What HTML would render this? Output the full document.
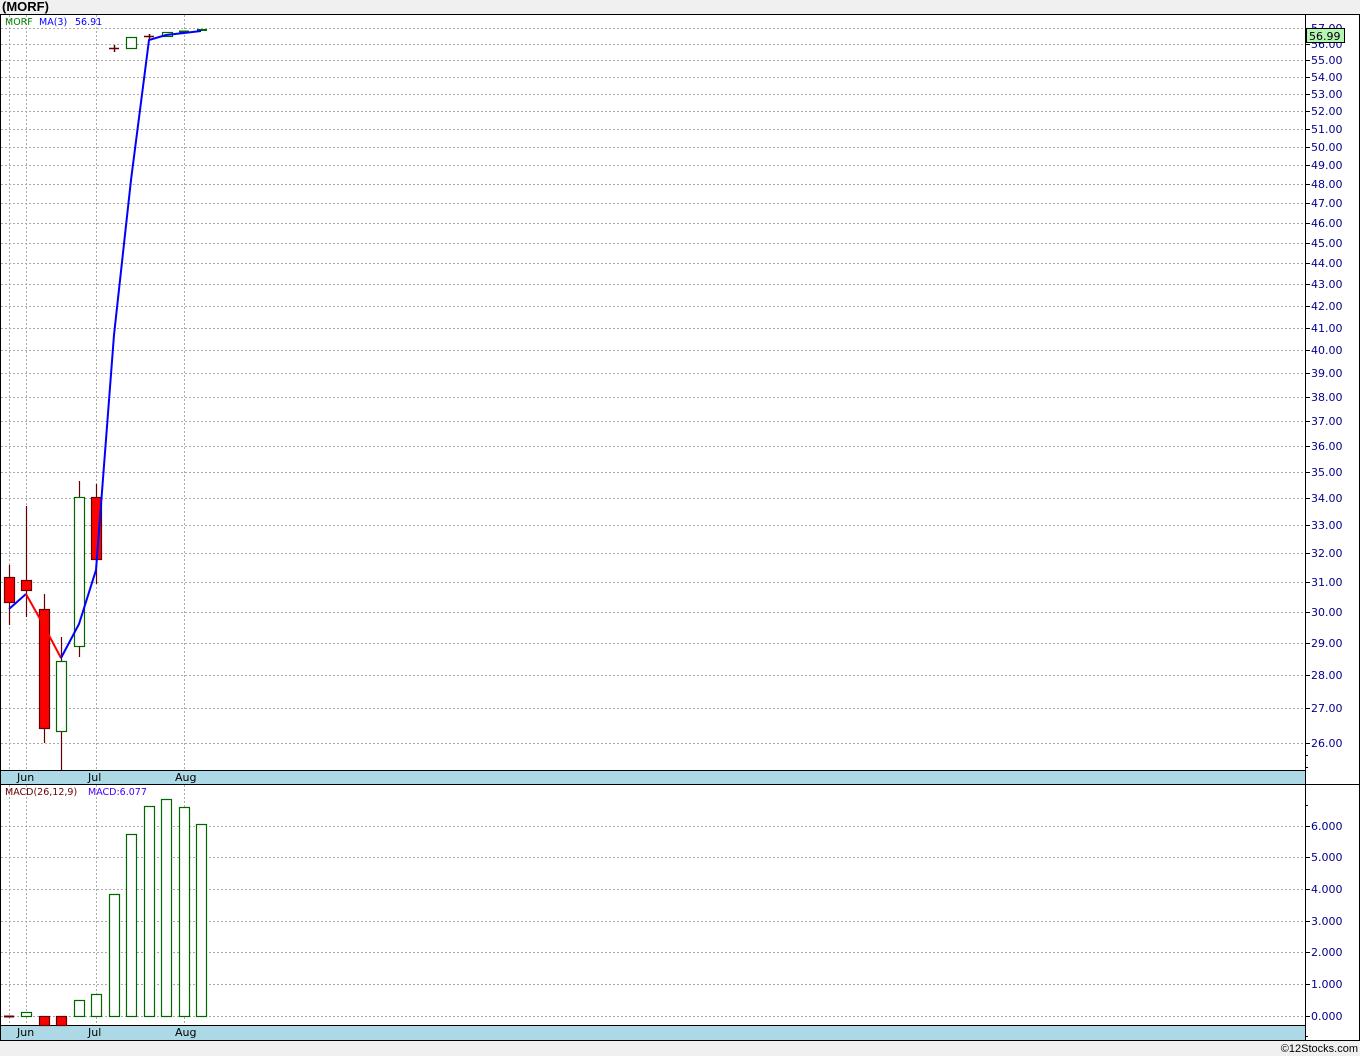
<!DOCTYPE html>
<html><head><meta charset="utf-8"><style>
html,body{margin:0;padding:0;background:#f0f0f0;}
svg{display:block;font-family:"DejaVu Sans","Liberation Sans",sans-serif;}
</style></head><body>
<svg width="1360" height="1056" viewBox="0 0 1360 1056" xmlns="http://www.w3.org/2000/svg">
<rect x="0" y="0" width="1360" height="1056" fill="#f0f0f0"/>
<text x="2" y="11" font-size="13" font-weight="bold" fill="#000" font-family="Liberation Sans, sans-serif">(MORF)</text>
<rect x="0" y="14" width="1360" height="1026" fill="#fff"/>
<line x1="0" y1="14.5" x2="1360" y2="14.5" stroke="#000"/>
<line x1="1359.5" y1="14" x2="1359.5" y2="1040" stroke="#000"/>
<line x1="0.5" y1="14" x2="0.5" y2="1040" stroke="#000"/>
<line x1="1305.5" y1="14" x2="1305.5" y2="1040" stroke="#000"/>
<line x1="0" y1="784.5" x2="1360" y2="784.5" stroke="#000"/>
<line x1="0" y1="1040.5" x2="1360" y2="1040.5" stroke="#000"/>
<rect x="1" y="770" width="1304" height="14" fill="#add8e6"/>
<line x1="0" y1="770.5" x2="1305" y2="770.5" stroke="#000"/>
<rect x="1" y="1025" width="1304" height="15" fill="#add8e6"/>
<line x1="0" y1="1025.5" x2="1305" y2="1025.5" stroke="#000"/>
<g font-size="11" fill="#000">
<text x="17" y="781">Jun</text><text x="88" y="781">Jul</text><text x="175" y="781">Aug</text>
<text x="17" y="1036">Jun</text><text x="88" y="1036">Jul</text><text x="175" y="1036">Aug</text>
</g>
<g stroke="#aaa" stroke-dasharray="2,2" stroke-width="1">
<path d="M1 28.5H1305M1 44.5H1305M1 60.5H1305M1 77.5H1305M1 94.5H1305M1 111.5H1305M1 129.5H1305M1 147.5H1305M1 165.5H1305M1 184.5H1305M1 203.5H1305M1 223.5H1305M1 243.5H1305M1 263.5H1305M1 284.5H1305M1 306.5H1305M1 328.5H1305M1 350.5H1305M1 373.5H1305M1 397.5H1305M1 421.5H1305M1 446.5H1305M1 472.5H1305M1 498.5H1305M1 525.5H1305M1 553.5H1305M1 582.5H1305M1 612.5H1305M1 643.5H1305M1 675.5H1305M1 708.5H1305M1 743.5H1305"/>
<path d="M9.5 15V770M26.5 15V770M96.5 15V770M184.5 15V770"/>
<path d="M1 826.5H1305M1 857.5H1305M1 889.5H1305M1 921.5H1305M1 952.5H1305M1 984.5H1305M1 1016.5H1305"/>
<path d="M9.5 785V1025M26.5 785V1025M96.5 785V1025M184.5 785V1025"/>
</g>
<g stroke="#000" stroke-width="1">
<path d="M1305 28.5h5M1305 44.5h5M1305 60.5h5M1305 77.5h5M1305 94.5h5M1305 111.5h5M1305 129.5h5M1305 147.5h5M1305 165.5h5M1305 184.5h5M1305 203.5h5M1305 223.5h5M1305 243.5h5M1305 263.5h5M1305 284.5h5M1305 306.5h5M1305 328.5h5M1305 350.5h5M1305 373.5h5M1305 397.5h5M1305 421.5h5M1305 446.5h5M1305 472.5h5M1305 498.5h5M1305 525.5h5M1305 553.5h5M1305 582.5h5M1305 612.5h5M1305 643.5h5M1305 675.5h5M1305 708.5h5M1305 743.5h5M1305 755.5h3M1305 767.5h3"/>
<path d="M1305 826.5h5M1305 857.5h5M1305 889.5h5M1305 921.5h5M1305 952.5h5M1305 984.5h5M1305 1016.5h5M1305 805.5h3M1305 1036.5h3"/>
</g>
<g font-size="11" fill="#00008b">
<text x="1311" y="32">57.00</text><text x="1311" y="48">56.00</text><text x="1311" y="64">55.00</text><text x="1311" y="81">54.00</text><text x="1311" y="98">53.00</text><text x="1311" y="115">52.00</text><text x="1311" y="133">51.00</text><text x="1311" y="151">50.00</text><text x="1311" y="169">49.00</text><text x="1311" y="188">48.00</text><text x="1311" y="207">47.00</text><text x="1311" y="227">46.00</text><text x="1311" y="247">45.00</text><text x="1311" y="267">44.00</text><text x="1311" y="288">43.00</text><text x="1311" y="310">42.00</text><text x="1311" y="332">41.00</text><text x="1311" y="354">40.00</text><text x="1311" y="377">39.00</text><text x="1311" y="401">38.00</text><text x="1311" y="425">37.00</text><text x="1311" y="450">36.00</text><text x="1311" y="476">35.00</text><text x="1311" y="502">34.00</text><text x="1311" y="529">33.00</text><text x="1311" y="557">32.00</text><text x="1311" y="586">31.00</text><text x="1311" y="616">30.00</text><text x="1311" y="647">29.00</text><text x="1311" y="679">28.00</text><text x="1311" y="712">27.00</text><text x="1311" y="747">26.00</text>
<text x="1311" y="830">6.000</text><text x="1311" y="861">5.000</text><text x="1311" y="893">4.000</text><text x="1311" y="925">3.000</text><text x="1311" y="956">2.000</text><text x="1311" y="988">1.000</text><text x="1311" y="1020">0.000</text>
</g>
<rect x="1306.5" y="28.5" width="38" height="14" fill="#b3f5b3" stroke="#000"/>
<text x="1309" y="40" font-size="11" fill="#000">56.99</text>
<text x="5" y="25" font-size="9.5" fill="#008000">MORF</text>
<text x="39" y="25" font-size="9.5" fill="#0000ff">MA(3)</text>
<text x="75" y="25" font-size="9.5" fill="#0000ff">56.91</text>
<text x="5" y="795" font-size="9.5" fill="#600">MACD(26,12,9)</text>
<text x="88" y="795" font-size="9.5" fill="#40f">MACD:6.077</text>
<g stroke-width="1.2">
<path d="M9.5 565V625M26.5 506V617M44.5 594V743M61.5 637V770M79.5 481V657M96.5 484V584" stroke="#600"/>
<rect x="4.5" y="577.5" width="10" height="25" fill="#f00" stroke="#600"/>
<rect x="21.5" y="580.5" width="10" height="10" fill="#f00" stroke="#600"/>
<rect x="39.5" y="609.5" width="10" height="119" fill="#f00" stroke="#600"/>
<rect x="56.5" y="661.5" width="10" height="70" fill="#fff" stroke="#060"/>
<rect x="74.5" y="497.5" width="10" height="149" fill="#fff" stroke="#060"/>
<rect x="91.5" y="497.5" width="10" height="62" fill="#f00" stroke="#600"/>
<path d="M109 48.5H119M114.5 45V52M144 36.5H154M149.5 34V39" stroke="#600" stroke-width="1.5"/>
<rect x="126.5" y="37.5" width="10" height="11" fill="#fff" stroke="#060"/>
<rect x="162.5" y="32.5" width="10" height="4" fill="#fff" stroke="#060"/>
<rect x="179" y="30.5" width="10" height="2" fill="#060"/>
<rect x="197" y="29" width="10" height="2" fill="#060"/>
</g>
<polyline points="9,609 26,594" fill="none" stroke="#00f" stroke-width="2"/>
<polyline points="26,594 44,626 61,658" fill="none" stroke="#f00" stroke-width="2"/>
<polyline points="61,658 79,624 96,570 114,335 131,180 149,40 166,35 184,33 201,31" fill="none" stroke="#00f" stroke-width="2"/>
<g stroke="#060" stroke-width="1.2" fill="#fff">
<path d="M4 1016.5H14" stroke="#600" stroke-width="2"/>
<rect x="21.5" y="1012.5" width="10" height="4"/>
<rect x="39.5" y="1016.5" width="10" height="9" fill="#f00" stroke="#600"/>
<rect x="56.5" y="1016.5" width="10" height="9" fill="#f00" stroke="#600"/>
<rect x="74.5" y="1000.5" width="10" height="16"/>
<rect x="91.5" y="994.5" width="10" height="22"/>
<rect x="109.5" y="894.5" width="10" height="122"/>
<rect x="126.5" y="834.5" width="10" height="182"/>
<rect x="144.5" y="806.5" width="10" height="210"/>
<rect x="161.5" y="799.5" width="10" height="217"/>
<rect x="179.5" y="807.5" width="10" height="209"/>
<rect x="196.5" y="824.5" width="10" height="192"/>
</g>
<text x="1358" y="1052" font-size="11" fill="#000" text-anchor="end" font-family="Liberation Sans, sans-serif">©12Stocks.com</text>
</svg>
</body></html>
